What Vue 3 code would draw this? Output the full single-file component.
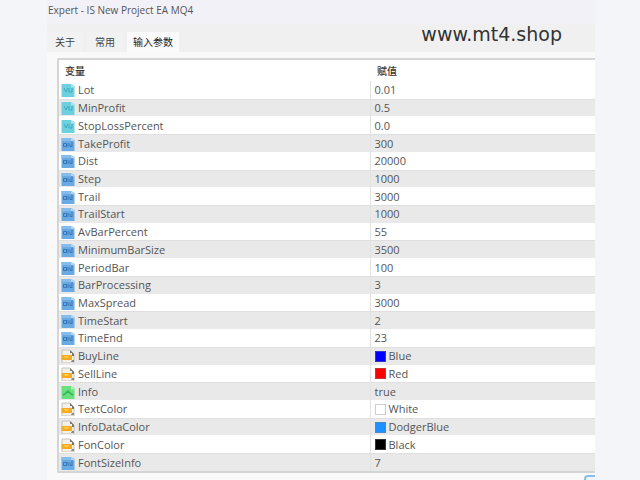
<template>
    <main class="page">
        <section class="dialog">
            <h1 class="title">Expert - IS New Project EA MQ4</h1>

            <nav class="tabs">
                <button
                    v-for="tab in tabs"
                    :key="tab"
                    type="button"
                    class="tab"
                    :class="{ active: tab === activeTab }"
                    @click="activeTab = tab"
                >{{ tab }}</button>
                <a class="site" href="#">www.mt4.shop</a>
            </nav>

            <div class="panel">
                <table class="inputs">
                    <thead>
                        <tr>
                            <th scope="col">变量</th>
                            <th scope="col">赋值</th>
                        </tr>
                    </thead>
                    <tbody>
                        <tr v-for="row in rows" :key="row.name">
                            <td>
                                <div class="cell">
                                    <svg class="icon" viewBox="0 0 14 14" aria-hidden="true">
                                        <template v-if="row.type === 'double'">
                                            <path d="M0.5 1h9.5l3.5 2v11h-13z" fill="#6dd0de" />
                                            <path d="M10 1l3.5 2v1.5H10z" fill="#a9e6ec" />
                                            <path d="M3 5l2 4 2-4M8 5v4h3V5" fill="none" stroke="#3fa9bc" />
                                        </template>
                                        <template v-else-if="row.type === 'int'">
                                            <path d="M0.5 1h9.5l3.5 2v11h-13z" fill="#6aaae3" />
                                            <path d="M0.5 1h9.5v3h-9.5z" fill="#86bcea" />
                                            <path d="M10 1l3.5 2v1.5H10z" fill="#b4d5f1" />
                                            <path d="M2.5 6.500h3v3h-3zM7 6v4M9 6.500v3h2M11 4v6" fill="none" stroke="#3876b8" />
                                        </template>
                                        <template v-else-if="row.type === 'color'">
                                            <path d="M1 1h8l4 4v9H1z" fill="#f3f0ea" stroke="#c6c2bb" />
                                            <path d="M9 1l4 4v2h-2V4H9z" fill="#777672" />
                                            <path d="M0.5 6h10.500v5H0.5z" fill="#f8aa22" />
                                            <path d="M3 7h5l-1 2H4z" fill="#ffcd45" />
                                            <path d="M11 11h2v2h-3z" fill="#8a8883" />
                                        </template>
                                        <template v-else>
                                            <path d="M0.5 1h9.5l3.5 2v11h-13z" fill="#69e07d" />
                                            <path d="M10 1l3.5 2v1.5H10z" fill="#b0f0ba" />
                                            <path d="M2 10l2-1 3-3 3 3 2 1" fill="none" stroke="#2fb352" stroke-width="1.5" />
                                        </template>
                                    </svg>
                                    <span>{{ row.name }}</span>
                                </div>
                            </td>
                            <td>
                                <div class="cell value">
                                    <i
                                        v-if="row.type === 'color'"
                                        class="swatch"
                                        :style="{ backgroundColor: row.value }"
                                    ></i>
                                    <span>{{ row.value }}</span>
                                </div>
                            </td>
                        </tr>
                    </tbody>
                </table>
            </div>

            <footer class="actions">
                <button type="button" class="action" aria-label="OK"></button>
            </footer>
        </section>
    </main>
</template>

<script setup>
import { ref } from 'vue';

const tabs = ['关于', '常用', '输入参数'];
const activeTab = ref('输入参数');

const rows = [
    { name: 'Lot', type: 'double', value: '0.01' },
    { name: 'MinProfit', type: 'double', value: '0.5' },
    { name: 'StopLossPercent', type: 'double', value: '0.0' },
    { name: 'TakeProfit', type: 'int', value: '300' },
    { name: 'Dist', type: 'int', value: '20000' },
    { name: 'Step', type: 'int', value: '1000' },
    { name: 'Trail', type: 'int', value: '3000' },
    { name: 'TrailStart', type: 'int', value: '1000' },
    { name: 'AvBarPercent', type: 'int', value: '55' },
    { name: 'MinimumBarSize', type: 'int', value: '3500' },
    { name: 'PeriodBar', type: 'int', value: '100' },
    { name: 'BarProcessing', type: 'int', value: '3' },
    { name: 'MaxSpread', type: 'int', value: '3000' },
    { name: 'TimeStart', type: 'int', value: '2' },
    { name: 'TimeEnd', type: 'int', value: '23' },
    { name: 'BuyLine', type: 'color', value: 'Blue' },
    { name: 'SellLine', type: 'color', value: 'Red' },
    { name: 'Info', type: 'bool', value: 'true' },
    { name: 'TextColor', type: 'color', value: 'White' },
    { name: 'InfoDataColor', type: 'color', value: 'DodgerBlue' },
    { name: 'FonColor', type: 'color', value: 'Black' },
    { name: 'FontSizeInfo', type: 'int', value: '7' },
];
</script>

<style>
body {
    margin: 0;
    background: #f3f5f8;
}
</style>

<style scoped>
.page {
    height: 100vh;
    min-height: 480px;
    padding: 0 45px 0 47px;
    box-sizing: border-box;
    overflow: hidden;
    font-family: "Open Sans", "Noto Sans CJK SC", sans-serif;
    font-size: 11px;
    color: #555;
}

.dialog {
    height: 100%;
    display: flex;
    flex-direction: column;
    overflow: hidden;
    background: #f9f9f9;
}

.title {
    margin: 0;
    padding: 0 1px 4px;
    font-size: 10px;
    font-weight: normal;
    line-height: 20px;
    background: #f2f1f8;
}

.tabs {
    display: flex;
    align-items: flex-end;
    height: 28px;
    background: #f0f0f0;
}

.tab {
    height: 20px;
    padding: 0 8px;
    margin-right: 4px;
    border: none;
    background: #f2f2f2;
    font: inherit;
    font-size: 10px;
    line-height: 20px;
    color: #444;
}

.tab.active {
    padding: 0 6px;
    background: #fafafa;
    color: #222;
}

.site {
    align-self: center;
    margin-left: auto;
    margin-right: 33px;
    padding-bottom: 8px;
    font-family: "DejaVu Sans", sans-serif;
    font-size: 19px;
    line-height: 20px;
    color: #333;
    text-decoration: none;
}

.panel {
    flex: 1;
    margin: 6px 0 0 10px;
    border: 2px solid #d4d5d6;
    border-right: none;
    border-radius: 2px 0 0 2px;
    background: #fff;
}

.inputs {
    width: 100%;
    height: 100%;
    table-layout: fixed;
    border-collapse: collapse;
}

.inputs th,
.inputs td {
    padding: 0;
    text-align: left;
}

.inputs th {
    height: 21px;
    padding-left: 6px;
    font-size: 10px;
    line-height: 16px;
    font-weight: 500;
    color: #333;
}

.inputs th:first-child {
    width: 305px;
}

.inputs th + th {
    padding-left: 7px;
}

.inputs td + td {
    border-left: 1px solid #e2e2e2;
}

.inputs tbody tr:nth-child(even) {
    background: #e9e9e9;
    box-shadow: inset 0 1px #dfdfdf;
}

.cell {
    display: flex;
    align-items: center;
    gap: 3px;
    padding: 1px 0 0 2px;
    line-height: 16px;
}

.cell.value {
    padding-left: 4px;
}

.icon {
    width: 14px;
    height: 14px;
}

.swatch {
    width: 11px;
    height: 11px;
    box-sizing: border-box;
    border: 1px solid rgba(130, 130, 130, 0.4);
}

.actions {
    display: flex;
    justify-content: flex-end;
    height: 5px;
    padding-top: 2px;
}

.action {
    width: 75px;
    height: 22px;
    margin-right: -64px;
    flex-shrink: 0;
    border: 2px solid #8cbce5;
    border-radius: 4px;
    background: #eef5fb;
}
</style>
